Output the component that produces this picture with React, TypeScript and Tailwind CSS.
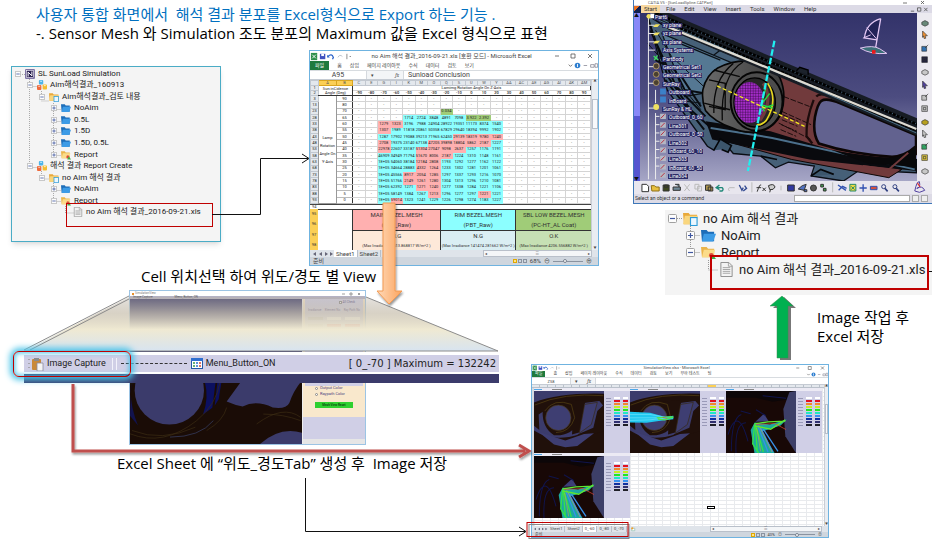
import type { ReactNode } from "react";
import clsx from "clsx";

const slideFont = "font-['Open_Sans','Noto_Sans_CJK_KR',sans-serif]";
const uiFont = "font-[Roboto,'Noto_Sans_CJK_KR',sans-serif]";

/* ---------- tree ---------- */

type IconKind = "app" | "cubes" | "project" | "folder" | "report" | "file";

interface Node {
  label: string;
  depth: number;
  icon: IconKind;
  sign?: "+" | "-";
}

const mainTree: Node[] = [
  { label: "SL SunLoad Simulation", depth: 0, icon: "app", sign: "-" },
  { label: "Aim해석결과_160913", depth: 1, icon: "cubes", sign: "-" },
  { label: "Aim해석결과_검토 내용", depth: 2, icon: "project", sign: "-" },
  { label: "NoAim", depth: 3, icon: "folder", sign: "+" },
  { label: "0.5L", depth: 3, icon: "folder", sign: "+" },
  { label: "1.5D", depth: 3, icon: "folder", sign: "+" },
  { label: "1.5D, 0.5L", depth: 3, icon: "folder", sign: "+" },
  { label: "Report", depth: 3, icon: "report", sign: "+" },
  { label: "해석 결과 Report Create", depth: 1, icon: "cubes", sign: "-" },
  { label: "no Aim 해석 결과", depth: 2, icon: "project", sign: "-" },
  { label: "NoAim", depth: 3, icon: "folder", sign: "+" },
  { label: "Report", depth: 3, icon: "report", sign: "-" },
  { label: "no Aim 해석 결과_2016-09-21.xls", depth: 4, icon: "file" },
];

const resultTree: Node[] = [
  { label: "no Aim 해석 결과", depth: 0, icon: "project", sign: "-" },
  { label: "NoAim", depth: 1, icon: "folder", sign: "+" },
  { label: "Report", depth: 1, icon: "report", sign: "-" },
  { label: "no Aim 해석 결과_2016-09-21.xls", depth: 2, icon: "file" },
];

const smallIndent = ["pl-[3px]", "pl-[15px]", "pl-[27px]", "pl-[39px]", "pl-[51px]"];
const largeIndent = ["pl-[3px]", "pl-[21px]", "pl-[39px]"];

const NodeIcon = ({ kind, className }: { kind: IconKind; className: string }) => (
  <svg viewBox="0 0 16 16" className={className}>
    {kind === "app" && (
      <>
        <rect x="0.5" y="0.5" width="15" height="15" fill="#4b3a80" />
        <rect x="2.5" y="2.5" width="11" height="11" fill="#2c2152" stroke="#fff" />
        <path d="M5 12V5l6 6V4" stroke="#fff" strokeWidth="1.6" fill="none" />
      </>
    )}
    {kind === "cubes" && (
      <>
        <rect x="3" y="0" width="7" height="7" rx="1.5" fill="#4db4e8" />
        <rect x="0" y="8" width="7" height="8" rx="1.5" fill="#ee6a3c" />
        <rect x="9" y="7" width="7" height="8" rx="1.5" fill="#f5bd30" />
        <path d="M5 2h3M2 10h3M11 9h3" stroke="#fff" strokeWidth="1.2" />
      </>
    )}
    {kind === "project" && (
      <>
        <path d="M0 2h6l1.500 2H15v10H1z" fill="#e9a93a" />
        <path d="M2 5h14l-2 9H0z" fill="#f9d67e" />
        <rect x="8" y="7" width="7" height="8.500" fill="#eaf7ff" stroke="#2d9bd8" strokeWidth="1.200" />
      </>
    )}
    {kind === "folder" && (
      <>
        <path d="M0 2h6l1.500 2H14v10H1z" fill="#1d6db8" />
        <path d="M3 6h13l-3 8.500H1z" fill="#3c9be6" />
      </>
    )}
    {kind === "report" && (
      <>
        <path d="M0 2h6l1.500 2H14v9H1z" fill="#eab44a" />
        <path d="M3 5h12l-2 8H1z" fill="#fbdc8a" />
        <circle cx="11" cy="11" r="2.500" fill="#e04a3a" />
        <path d="M10 15l2.500-5 3.500 5z" fill="#3fae49" />
      </>
    )}
    {kind === "file" && (
      <>
        <path d="M2 .5h8.500L14 4v11.500H2z" fill="#f3f3f3" stroke="#8a8a8a" />
        <path d="M10 .5V4.500h4M4 6h8M4 8h8M4 10h8M4 12h8" stroke="#9a9a9a" strokeWidth=".9" fill="none" />
      </>
    )}
  </svg>
);

const Tree = ({ nodes, large = false }: { nodes: Node[]; large?: boolean }) => (
  <ul className={clsx("relative grid auto-rows-fr", large ? "h-[68px] text-[13px]" : "h-[150px] text-[8px]", uiFont)}>
    {nodes.map((node, i) => (
      <li
        key={i}
        className={clsx("flex min-h-0 items-center whitespace-nowrap leading-none text-[#222]", large ? largeIndent[node.depth] : smallIndent[node.depth])}
      >
        <svg viewBox="0 0 9 9" className={clsx("shrink-0", large ? "mr-[6px] size-[9px]" : "mr-[4px] size-[6px]")}>
          {node.sign && (
            <>
              <rect x=".5" y=".5" width="8" height="8" rx="1" fill="#fdfdfd" stroke="#a0a0a0" />
              <path d={node.sign === "+" ? "M2 4.500h5M4.500 2v5" : "M2 4.500h5"} stroke="#3f57a0" strokeWidth="1.200" />
            </>
          )}
        </svg>
        <NodeIcon kind={node.icon} className={clsx("shrink-0", large ? "mr-[5px] size-[15px]" : "mr-[3px] size-[10px]")} />
        {node.label}
      </li>
    ))}
  </ul>
);

/* ---------- excel window ---------- */

interface ExcelWindowProps {
  title: string;
  cell: string;
  formula: string;
  ribbon: string[];
  tabs: string[];
  zoom: string;
  compact?: boolean;
  children: ReactNode;
}

const ExcelWindow = ({ title, cell, formula, ribbon, tabs, zoom, compact = false, children }: ExcelWindowProps) => (
  <section className={clsx("flex flex-col overflow-hidden border border-[#6fb3e0] bg-white leading-none text-[#444]", uiFont, compact ? "h-[174px] text-[4px]" : "h-[216px] text-[6px]")}>
    <div className={clsx("flex shrink-0 items-center", compact ? "h-[6px]" : "h-[10px]")}>
      <svg viewBox="0 0 46 10" className={compact ? "h-[6px]" : "h-[9px]"}>
        <path d="M1 1h7v8H1z" fill="#2f8f4a" />
        <path d="M2.500 3l4 4m0-4l-4 4" stroke="#fff" />
        <path d="M11 2h6v6h-6z" fill="#3f51c0" />
        <path d="M12.500 2h3v2.500h-3z" fill="#fff" />
        <path d="M20 5q4-4 6 1l-1 2" stroke="#2a62c9" strokeWidth="1.400" fill="none" />
        <path d="M19 3v3h3z" fill="#2a62c9" />
        <path d="M31 6q2-4 5-1" stroke="#b9bfc9" fill="none" />
        <path d="M41 2v6M44 5h2" stroke="#666" strokeWidth=".8" />
      </svg>
      <span className="flex-1 truncate text-center">{title}</span>
      <svg viewBox="0 0 46 8" className={compact ? "h-[6px]" : "h-[8px]"}>
        <path d="M3 4h4M19 2h4v4h-4zM36 2l4 4m0-4l-4 4" stroke="#555" strokeWidth=".8" fill="none" />
      </svg>
    </div>
    <div className={clsx("flex shrink-0 items-center gap-[8px] border-b border-[#d8dce0]", compact ? "h-[7px]" : "h-[10px] text-[5px]")}>
      {ribbon.map((item, i) => (
        <button key={item} className={clsx("whitespace-nowrap", i === 0 && "h-full bg-[#1f7a3e] text-white", i === 0 && (compact ? "px-[3px]" : "px-[5px]"))}>
          {item}
        </button>
      ))}
      <svg viewBox="0 0 36 8" className={clsx("ml-auto", compact ? "h-[5px]" : "h-[7px]")}>
        <path d="M2 3l2 2 2-2" stroke="#666" fill="none" />
        <circle cx="12" cy="4" r="3.200" fill="#2f7fd0" />
        <path d="M19 4h4M27 3h4v3h-4zM32 2h3v4h-3z" stroke="#667" strokeWidth=".7" fill="none" />
        <path d="M12 2.200v3.600" stroke="#fff" />
      </svg>
    </div>
    <div className={clsx("flex shrink-0 items-center border-b border-[#c5cbd3]", compact ? "h-[7px]" : "h-[9px] text-[7px]")}>
      <input aria-label="이름 상자" readOnly defaultValue={cell} className={clsx("h-full min-w-0 text-center", compact ? "w-[38px]" : "w-[56px]")} />
      <span className={clsx("flex h-full items-center justify-between border-x border-[#d5d9de] bg-[#f3f5f7] px-1 text-[5px]", compact ? "w-[26px]" : "w-[38px]")}>
        <span>▾</span>
        <i className="font-serif">fx</i>
      </span>
      <input aria-label="수식 입력줄" readOnly defaultValue={formula} className="h-full min-w-0 flex-1 px-1" />
    </div>
    <div className="flex min-h-0 flex-1">
      <div className="min-w-0 flex-1">{children}</div>
      <div className={clsx("flex flex-col items-center border-l border-[#c9ced6] bg-[#e9edf2] text-[3px]", compact ? "w-[4px]" : "w-[7px]")}>
        <span>▲</span>
        <span className="mt-[16px] h-[30px] w-full border border-[#b9c0ca] bg-[#f8f9fb]" />
        <span className="mt-auto">▼</span>
      </div>
    </div>
    <div className={clsx("flex shrink-0 items-center bg-[#dfe4ea]", compact ? "h-[6px]" : "h-[7px]")}>
      <svg viewBox="0 0 24 6" className={compact ? "h-[4px]" : "h-[6px]"}>
        <path d="M2 1v4M6 1v4L3 3zM12 1v4L9 3zM15 1v4l3-2zM20 1v4l3-2z" fill="#667" />
      </svg>
      {tabs.map((tab, i) => (
        <button key={tab} className={clsx("h-full border-r border-[#b9c0ca] px-[2px] whitespace-nowrap", (compact ? i === 2 : i === 0) && "bg-white")}>
          {tab}
        </button>
      ))}
      <svg viewBox="0 0 8 8" className="ml-[4px] h-[5px]">
        <path d="M1 2h5v4H1z" fill="#fff" stroke="#8ba" />
        <circle cx="2" cy="2" r="1.800" fill="#f0a030" />
      </svg>
      <span className="mr-[6px] ml-auto flex h-full w-[38%] items-center justify-between border border-[#b9c0ca] bg-[#f4f6f8] px-px text-[4px]">
        <span>◂</span>
        <span>≡</span>
        <span>▸</span>
      </span>
    </div>
    <div className={clsx("flex shrink-0 items-center gap-[3px] bg-[#cfd6de] px-[3px]", compact ? "h-[5px]" : "h-[8px]")}>
      <span>준비</span>
      <span className="ml-auto flex gap-px">
        <i className="size-[4px] border border-[#e0a800] bg-[#ffe48a]" />
        <i className="size-[4px] border border-[#8a93a0]" />
        <i className="size-[4px] border border-[#8a93a0]" />
      </span>
      <span>{zoom}</span>
      <span>⊖</span>
      <input
        type="range"
        aria-label="확대/축소"
        defaultValue={40}
        className="h-px w-[30px] appearance-none bg-[#8a93a0] [&::-webkit-slider-thumb]:size-[4px] [&::-webkit-slider-thumb]:appearance-none [&::-webkit-slider-thumb]:rounded-full [&::-webkit-slider-thumb]:border [&::-webkit-slider-thumb]:border-[#7a8390] [&::-webkit-slider-thumb]:bg-white"
      />
      <span className="mr-[3px]">⊕</span>
    </div>
  </section>
);

/* ---------- irradiance sheet ---------- */

const columnNames = ["C", "E", "G", "I", "K", "M", "O", "Q", "S", "U", "W", "Y", "AA", "AC", "AE", "AG", "AI", "AK", "AM"];
const longitudes = [-90, -80, -70, -60, -50, -40, -30, -20, -10, 0, 10, 20, 30, 40, 50, 60, 70, 80, 90];

// r = over the limit, g = below the limit, plain numbers are cyan
const rows: [number, number, string][] = [
  [3, 90, ""],
  [13, 80, ""],
  [23, 70, "- - - - - g0.034 - - - -"],
  [28, 65, "- - 1714 2724 3848 4891 7098 g3.922 g2.392 -"],
  [33, 60, "r1279 r1323 3196 7988 24904 28922 19351 11173 8374 1540"],
  [38, 55, "r1307 1989 11818 20861 50358 67829 29640 18394 9992 1902"],
  [43, 50, "1287 17902 19088 39213 71965 62450 r29139 r18319 r9780 r1240"],
  [48, 45, "r2708 19375 23140 67138 r47205 r39898 r18804 r5862 r2187 1227"],
  [53, 40, "r22978 22607 33187 r51304 r27047 r9098 r2637 1257 1176 1191"],
  [58, 35, "46909 34949 71794 r51670 r8006 r2187 1224 1310 1148 1161"],
  [63, 30, "1E+05 54060 38184 r12184 r2808 1193 1292 1277 1162 1122"],
  [68, 25, "1E+05 34664 28883 r4332 r1264 1233 1302 1281 1201 1061"],
  [73, 20, "1E+05 45566 r8917 r2054 r1285 1297 1337 1293 1216 1070"],
  [78, 15, "1E+05 51766 r2149 r1261 r1280 1304 1313 1296 1210 1081"],
  [83, 10, "1E+05 62392 1271 r1271 r1240 1277 1338 1284 1221 1106"],
  [88, 5, "1E+05 58149 1384 1267 r1213 1296 1277 1297 r1221 1221"],
  [93, 0, "1E+05 r59014 1323 1241 1229 1226 1298 1274 1183 1227"],
];

const cellColor = (value: string) => {
  if (value === "-") return "bg-white border-[#d4d4d4]";
  if (value[0] === "r") return "bg-[#ffb0b0] border-[#ffb0b0]";
  if (value[0] === "g") return "bg-[#a0cc78] border-[#a0cc78]";
  return "bg-[#8cffff] border-[#8cffff]";
};

const meshes = [
  { name: "MAIN BEZEL.MESH", material: "(PBT_Raw)", result: "N.G", max: "(Max Irradiance 1513.868817 W/m^2 )", head: "bg-[#ffb0b0]", body: "bg-[#fde9d9]", width: "flex-[7]" },
  { name: "RIM BEZEL.MESH", material: "(PBT_Raw)", result: "N.G", max: "(Max Irradiance 141474.281662 W/m^2 )", head: "bg-[#8cffff]", body: "bg-[#daeef3]", width: "flex-[6]" },
  { name: "SBL LOW BEZEL.MESH", material: "(PC-HT_AL Coat)", result: "O.K", max: "(Max Irradiance 4206.556882 W/m^2 )", head: "bg-[#a0cc78]", body: "bg-[#c6e0b4]", width: "flex-[6]" },
];

const IrradianceSheet = () => (
  <div className="flex h-full flex-col">
    <table className="h-[124px] w-full table-fixed border-collapse text-center text-[4px] leading-none text-[#222]">
      <colgroup>
        <col className="w-[8px]" />
        <col className="w-[18px]" />
        <col className="w-[16px]" />
      </colgroup>
      <thead>
        <tr className="bg-[#e4e8ed] text-[#555]">
          <th className="border border-[#c2c8d0]" />
          <th className="border border-[#d9a520] bg-[#fbcf55] font-normal">A</th>
          <th className="border border-[#d9a520] bg-[#fbcf55] font-normal">B</th>
          {columnNames.map((name) => (
            <th key={name} className="border border-[#c2c8d0] font-normal">{name}</th>
          ))}
        </tr>
        <tr>
          <th className="border border-[#c2c8d0] bg-[#e4e8ed] font-normal">1</th>
          <th rowSpan={2} colSpan={2} className="border-r border-b border-[#333] font-normal whitespace-nowrap">
            Sun inCidence
            <br />
            Angle (Deg)
          </th>
          <th colSpan={19} className="border-r border-b border-r-[#333] border-b-[#d4d4d4] font-normal">Lamimg Rotation Angle On Z-Axis</th>
        </tr>
        <tr>
          <th className="border border-[#c2c8d0] bg-[#e4e8ed] font-normal">2</th>
          {longitudes.map((deg) => (
            <th key={deg} className="border-b border-[#333] font-medium">{deg}</th>
          ))}
        </tr>
      </thead>
      <tbody>
        {rows.map(([row, latitude, text], r) => {
          const values = ["-", "-", ...(text ? text.split(" ") : Array(10).fill("-")), ...Array(7).fill("-")];
          return (
            <tr key={row}>
              <th className="border border-[#c2c8d0] bg-[#e4e8ed] p-0 font-normal">{row}</th>
              {r === 0 && (
                <th rowSpan={17} className="border border-[#999] leading-[8px] font-normal">
                  Lamp Rotation Angle On Y-Axis
                </th>
              )}
              <th className="border border-[#bbb] border-r-[#333] p-0 font-normal">{latitude}</th>
              {values.map((value, i) => (
                <td key={i} className={clsx("border p-0", cellColor(value))}>{value.replace(/^[rg]/, "")}</td>
              ))}
            </tr>
          );
        })}
      </tbody>
    </table>
    <div className="h-[5px] shrink-0 border-t border-[#444] pl-[2px] text-[4px]">94</div>
    <div className="flex min-h-0 flex-1 text-[#333]">
      <div className="grid w-[8px] grid-rows-4 items-center bg-[#fbcf55] text-center text-[4px]">
        <span>95</span>
        <span>96</span>
        <span>97</span>
        <span>98</span>
      </div>
      <div className="w-[34px] border-t border-[#444]" />
      {meshes.map((mesh) => (
        <div key={mesh.name} className={clsx("flex min-w-0 flex-col border-t border-l border-[#333] text-center", mesh.width)}>
          <div className={clsx("flex flex-1 flex-col justify-around border-b border-[#333] text-[6px]", mesh.head)}>
            <span className="whitespace-nowrap">{mesh.name}</span>
            <span>{mesh.material}</span>
          </div>
          <div className={clsx("flex flex-1 flex-col justify-around text-[6px]", mesh.body)}>
            <span>{mesh.result}</span>
            <span className="text-[4px] whitespace-nowrap">{mesh.max}</span>
          </div>
        </div>
      ))}
    </div>
  </div>
);

/* ---------- capture sheet ---------- */

const legend = ["bg-white", "bg-[#e01020]", "bg-[#f08830]", "bg-[#c8f020]", "bg-[#20e820]", "bg-[#20e8c8]", "bg-[#3890f0]", "bg-[#1030a0]", "bg-[#303070]", "bg-[#202028]"];

const LampScene = ({ beam = false }: { beam?: boolean }) => (
  <svg viewBox="0 0 210 185" preserveAspectRatio="none" className="h-full w-[70px] bg-[#3b3b6b]">
    <path d="M0 34Q80 4 210 8V46L196 30 150 36 60 40 14 70 16 116 0 104zM0 118Q80 170 210 96V185H0z" fill="#20100a" />
    <path d="M26 60Q70 16 126 36L134 94Q110 136 60 132 24 110 26 60zM120 30l34-2-14 94-26 8z" fill="#20100a" />
    <path d="M190 60l20-20v80l-60 16-20-6 48-20z" fill="#20100a" />
    <ellipse cx="73" cy="80" rx="38" ry="38" fill="#3e3e72" stroke="#4a3812" strokeWidth="2" />
    <path d="M152 40l38-6-18 66-36 26z" fill="#3e3e72" stroke="#382a14" strokeWidth="2" />
    <path d="M14 122l80 26 56-20 30-2-50 38-36 4-34-8z" fill="#3e3e72" />
    <path d="M2 42Q90 4 208 14M32 60Q60 20 112 40l10 40q-14 44-56 44" stroke="#574414" strokeWidth="2" fill="none" />
    {beam && (
      <>
        <path d="M0 62l60 3 44 12 26-3v10l-28 3-52 8-50-1z" fill="#20c8f0" />
        <path d="M0 70h60l45 8M0 80h90M0 88l60-2 50-6" stroke="#8cecff" strokeWidth="1.500" fill="none" />
        <path d="M80 80l28-2 22-1M84 84l20 2 26-8" stroke="#50e050" strokeWidth="4" fill="none" />
        <path d="M98 79l14 3" stroke="#e85030" strokeWidth="2" />
      </>
    )}
  </svg>
);

const RayScene = () => (
  <svg viewBox="0 0 210 185" preserveAspectRatio="none" className="h-full w-[70px] bg-[#180806]">
    <path d="M0 20h90l50 12 70-10V0H0z" fill="#0c0608" />
    <path d="M172 54l18-50 20-4v185l-32-50z" fill="#3d3f68" />
    <path d="M88 92l26-24 14 22z" fill="#3d3f78" />
    <path d="M6 130q30-90 60 20M16 180q0-100 30-110M30 185q-4-90 30-90M44 60l30 8M90 56l30 18M110 14l70 8" stroke="#10144c" strokeWidth="3" fill="none" />
    <path d="M74 116l12-22 46 6 50-15-18 18-56 18 40 68H86z" fill="#1ca8a0" />
    <path d="M86 98l-6 60 18 27M88 102l6 80M90 104l22 78" stroke="#38e048" strokeWidth="4" fill="none" />
    <path d="M96 106l30 76M104 110l36 72M112 114l44 66" stroke="#3890e8" strokeWidth="4" />
    <path d="M92 110l12 70M98 102l40 80" stroke="#e8a040" strokeWidth="1.500" />
    <path d="M86 98l40-6 52-2M86 104l48 10 44-28" stroke="#60e830" strokeWidth="4" fill="none" />
    <path d="M90 100l56-3 34 18" stroke="#e84838" strokeWidth="2" fill="none" />
  </svg>
);

const Capture = ({ children }: { children: ReactNode }) => (
  <figure className="flex h-[65px] w-[96px] flex-col">
    <div className="flex h-[3px] items-center gap-[10px] bg-[#eceaf4]">
      <i className="h-px w-[8px] bg-[#50a8e8]" />
      <i className="h-px w-[10px] bg-[#888]" />
    </div>
    <div className="flex min-h-0 flex-1">
      {children}
      <div className="flex-1 bg-[#d0cfe6] pt-[6px]">
        <div className="grid grid-cols-3 gap-x-[3px] gap-y-px px-[2px]">
          {legend.map((color) => [
            <i key={color} className="my-auto h-px bg-[#9a9ab8]" />,
            <i key={color + "a"} className={clsx("h-[2px]", color)} />,
            <i key={color + "b"} className={clsx("h-[2px]", color)} />,
          ])}
        </div>
      </div>
    </div>
  </figure>
);

const CaptureSheet = () => (
  <div className="flex h-full flex-col">
    <div className="flex h-[3px] shrink-0 justify-end border-b border-[#b9c0ca] bg-[repeating-linear-gradient(90deg,#e4e8ed_0_7px,#b9c0ca_7px_8px)]">
      <i className="mr-[108px] w-[8px] bg-[#fbcf55]" />
    </div>
    <div className="relative flex-1 border-l-2 border-[#d5dae1] bg-[linear-gradient(#e8eaed_1px,transparent_1px),linear-gradient(90deg,#e8eaed_1px,transparent_1px)] bg-[size:8px_4px]">
      <div className="flex flex-wrap content-start">
        <Capture><LampScene /></Capture>
        <Capture><LampScene beam /></Capture>
        <Capture><RayScene /></Capture>
        <Capture><RayScene /></Capture>
      </div>
      <i className="absolute right-[109px] bottom-[17px] h-[3px] w-[8px] border border-black" />
    </div>
  </div>
);

/* ---------- viewer with magnified toolbar ---------- */

const Viewer = () => (
  <div className={clsx("flex h-[155px] w-[237px] flex-col border border-[#9cc4e4] bg-white", uiFont)}>
    <div className="flex h-[5px] items-center px-[2px] text-[3px] leading-none text-[#777]">
      <i className="mr-px size-[2px] bg-[#e8902c]" />
      SimulationView
      <svg viewBox="0 0 22 4" className="ml-auto h-[4px]" fill="none" stroke="#777" strokeWidth=".7">
        <path d="M1 2h3M9 1h2v2H9zM17 1l2 2m0-2l-2 2" />
      </svg>
    </div>
    <div className="flex h-[3px] items-center bg-[#b4b2c4] text-[3px] leading-none text-[#555]">
      <span className="ml-[3px]">Image Capture</span>
      <span className="ml-[22px]">Menu_Button_ON</span>
    </div>
    <div className="flex min-h-0 flex-1">
      <svg viewBox="0 0 516 441" preserveAspectRatio="none" className="h-full w-[172px] bg-[#1a0c06]">
        <path d="M0 0h516v200H0z" fill="#3b3b6b" />
        <path d="M225 255l32-4-10 80-28 20q18-50 6-96zM262 255h12l-8 50-12 20z" fill="#0c1060" />
        <path d="M4 255q-8 60 20 130l-24-30z" fill="#12134e" />
        <path d="M0 410q100 40 200-40 60-50 70-118M230 400q50-30 60-70M6 400q90 36 190-10M380 380q80-60 132-20M400 350q60 0 112 20" stroke="#3c2e14" strokeWidth="2" fill="none" />
        <path d="M120 420q90 0 130-50" stroke="#39446e" strokeWidth="2" fill="none" />
        <circle cx="118" cy="278" r="104" fill="#3b3b6b" />
        <path d="M290 312l44-62h180q-24 30-36 66-10 20-50 14-50-24-90-3-24-4-48-15z" fill="#3b3b6b" />
        <path d="M390 441q60-54 126-34v34z" fill="#3b3b6b" />
      </svg>
      <div className="flex min-w-0 flex-1 flex-col border-l border-[#eee]">
        <div className="flex flex-1 flex-col bg-[#f9e8cc] px-[12px] text-[4px] leading-none text-[#4a3f80]">
          <div className="-mx-[10px] h-[87px] shrink-0 bg-[#d0cfe6] pt-[2px] text-[3px]">
            <label className="flex items-center justify-end gap-px pr-[8px]">
              <input type="checkbox" className="size-[3px] appearance-none border border-[#888] bg-white" />
              All Check
            </label>
            <div className="mt-[5px] flex justify-between px-[3px]">
              <span>Irradiance</span>
              <span>Element No</span>
              <span>Ray Path No</span>
            </div>
            <div className="mt-[5px] grid grid-cols-3 gap-[4px] px-[3px]">
              <i className="h-[3px] bg-[#bbb]" />
              <i className="h-[3px] bg-white" />
              <i className="h-[3px] bg-white" />
              <i className="h-[3px] bg-[#bbb]" />
              <i className="h-[3px] bg-[#e05050]" />
              <i className="h-[3px] bg-[#e05050]" />
            </div>
          </div>
          <label className="mb-[2px] flex h-[4px] items-center gap-[2px] whitespace-nowrap">
            <input type="radio" name="colour" className="size-[3px] appearance-none rounded-full border border-[#888] bg-white" />
            Output Color
          </label>
          <label className="flex h-[4px] items-center gap-[2px] whitespace-nowrap">
            <input type="radio" name="colour" className="size-[3px] appearance-none rounded-full border border-[#888] bg-white" />
            Raypath Color
          </label>
          <button className="mt-[6px] h-[6px] bg-[#2fd02f] text-[3px] leading-none font-bold whitespace-nowrap text-[#0c4c10]">Mesh View Reset</button>
        </div>
        <div className="h-[22px] bg-[#d0cfe6]" />
        <div className="h-[5px] bg-[#e6e6e6]" />
      </div>
    </div>
  </div>
);

const Toolbar = () => (
  <div className={clsx("w-[475px]", uiFont)}>
    <div className="flex h-[22px] items-center border-t-[3px] border-b-2 border-white bg-[#d0cfe6] text-[9px] text-[#222]">
      <button className="ml-1 flex items-center gap-[3px] whitespace-nowrap">
        <svg viewBox="0 0 16 14" className="h-[14px]">
          <path d="M1 2v1M1 6v1M1 10v1" stroke="#999" strokeWidth="1.500" />
          <rect x="4" y="2" width="9" height="11" rx="1" fill="#c98a3a" />
          <rect x="6" y="1" width="5" height="3" fill="#8c8c8c" />
          <path d="M9 6h6v8H9z" fill="#f5f5f5" stroke="#8a8aa0" strokeWidth=".8" />
        </svg>
        Image Capture
      </button>
      <i className="ml-[6px] h-[12px] w-[5px] border-x border-[#f2f2fa]" />
      <i className="mx-[4px] w-[66px] border-t border-dashed border-[#333]" />
      <button className="flex items-center gap-[3px] whitespace-nowrap">
        <svg viewBox="0 0 12 11" className="h-[11px]">
          <rect x=".5" y=".5" width="11" height="10" fill="#fff" stroke="#2459a8" />
          <path d="M0 0h12v3H0z" fill="#2f6fd0" />
          <path d="M2 5h2M2 8h2" stroke="#3a9a4a" strokeWidth="1.500" />
          <path d="M5 5h2M5 8h2" stroke="#2f6fd0" strokeWidth="1.500" />
          <path d="M8 5h2M8 8h2" stroke="#d04a3a" strokeWidth="1.500" />
        </svg>
        Menu_Button_ON
      </button>
      <span className="mr-[3px] ml-auto font-['DejaVu_Sans',sans-serif] text-[10px] whitespace-nowrap">[ 0_-70 ] Maximum = 132242</span>
    </div>
    <div className="h-[9px] bg-[#3b3b6b]" />
  </div>
);

/* ---------- CAD window ---------- */

const cadTree = ["Part6", "xy plane", "yz plane", "zx plane", "Axis Systems", "PartBody", "Geometrical Set1", "Geometrical Set2", "SunRay", "Outboard", "InBoard", "SunRay & HL", "Outboard_0_60", "Line301", "Outboard_0_50", "Line302", "InBoard_60_10", "Line303", "InBoard_60_50", "Line304"];

const CadScene = () => (
  <svg viewBox="12 38 855 507" preserveAspectRatio="none" className="h-full w-full">
    <defs>
      <linearGradient id="sky" x2="0" y2="1">
        <stop offset="0" stopColor="#33336a" />
        <stop offset=".5" stopColor="#4c4c80" />
        <stop offset="1" stopColor="#a6a6c6" />
      </linearGradient>
      <linearGradient id="barrel">
        <stop offset="0" stopColor="#6a6a6a" />
        <stop offset="1" stopColor="#3c3c3c" />
      </linearGradient>
      <pattern id="mesh" width="8" height="8" patternUnits="userSpaceOnUse">
        <path d="M0 0h8M0 0v8" stroke="#2c0838" strokeWidth="2.500" />
      </pattern>
    </defs>
    <path d="M12 38h855v507H12z" fill="url(#sky)" />
    <path d="M36 45L100 85 440 225 560 430 865 480V520L690 512 640 545 540 530 550 500 470 488 430 505 385 470 300 462 272 430 240 452 220 440 96 270z" fill="#466078" stroke="#0a0d14" strokeWidth="4" />
    <path d="M80 100l220 90-90 90-60 10zM300 120l-60 45M110 120l150 60" fill="#557893" stroke="#0c1218" strokeWidth="4" />
    <path d="M38 60l60 170 70 100 70 60M44 90l80 170 90 90M60 180l60 30 30 60 60 10M140 230l60 90M90 240l120 150" stroke="#080b10" strokeWidth="6" fill="none" />
    <path d="M36 130l80 90M60 90l50 80 110 100M120 300l80 10M150 270l50 60" stroke="#0b1016" strokeWidth="3" fill="none" />
    <path d="M428 215l62 15 110 45 265 118v72L812 515 520 455 395 405z" fill="#713a3c" stroke="#160808" strokeWidth="4" />
    <path d="M240 395l180 25 400 90-40 25-300-55-240-65z" fill="#713a3c" stroke="#0a0505" strokeWidth="3" />
    <path d="M215 365l200 30 200 60 250 35v25l-330-35-300-60z" fill="#090a0e" />
    <path d="M230 385l190 30 440 95" stroke="#4c708c" strokeWidth="6" fill="none" />
    <path d="M572 303q15-10 60 8l232 95v34q-34 30-74 32-126-8-226-40-20-30-12-80 8-40 20-49z" fill="#62628f" stroke="#0c0606" strokeWidth="8" />
    <path d="M556 290q10-12 40-2M548 300q-24 60-22 110l18 22" stroke="#1c0c0c" strokeWidth="7" fill="none" />
    <path d="M600 450q110 24 190 24 40-2 74-32v60l-150-10z" fill="#08080a" />
    <path d="M700 500l80 10 60-50" stroke="#713a3c" strokeWidth="6" fill="none" />
    <path d="M455 290l80 30M450 335l90 40M440 370l100 50M452 345l48 20m-50-5l48 20m-50-5l48 20m-50-5l48 20" stroke="#190b0b" strokeWidth="3" strokeDasharray="18 5" />
    <path d="M206 270q10-45 46-66 60-30 120-18 50 10 72 48 22 50 4 106-22 50-78 56-36 6-70-10-60-20-86-54-12-30-8-62z" fill="url(#barrel)" stroke="#060606" strokeWidth="5" />
    <path d="M300 190q-64 50-60 150M330 186q-70 40-64 176M210 310l80 20M240 210l80 20M225 240l50 10v80l-50-10" stroke="#080808" strokeWidth="4" fill="none" />
    <ellipse cx="372" cy="305" rx="80" ry="88" fill="#4c4c4c" stroke="#050505" strokeWidth="6" />
    <ellipse cx="366" cy="308" rx="64" ry="74" fill="#262626" stroke="#000" strokeWidth="4" />
    <path d="M406 250q34 50-4 112-12 14-30 14" stroke="#e8d820" strokeWidth="5" fill="none" />
    <path d="M392 250q34 50-10 112" stroke="#713a3c" strokeWidth="10" fill="none" />
    <ellipse cx="350" cy="308" rx="46" ry="62" fill="#a32bc8" />
    <ellipse cx="350" cy="308" rx="46" ry="62" fill="url(#mesh)" />
    <path d="M400 265l-14 50 36 10M386 315l26-34M386 315l10 20m-6-10l34-10" stroke="#20e040" strokeWidth="4" fill="none" />
    <path d="M46 38h54l767 318v52L100 88z" fill="#171c24" />
    <path d="M80 48l785 324M70 60l795 340M50 44l400 180" stroke="#4b7088" strokeWidth="3" />
    <path d="M60 38l807 336M100 68l767 325" stroke="#000" strokeWidth="8" strokeDasharray="10 3" />
    <path d="M98 80l767 308" stroke="#dedbd2" strokeWidth="7" />
    <path d="M495 212l10-10 26 8v14" fill="#1c222c" stroke="#000" strokeWidth="4" />
    <path d="M240 452l20-34 34 20-10 20-20-8M385 470l50 10M540 530l30-20 40 15" fill="#3c566c" stroke="#05070a" strokeWidth="5" />
    <path d="M250 258l270 122" stroke="#f4e820" strokeWidth="4" strokeDasharray="12 7" />
    <path d="M427 122l-82 393" stroke="#20f0f0" strokeWidth="7" strokeDasharray="20 6" />
    <path d="M755 55l-18 100M755 55q-46 14-50 58l38 6" stroke="#e4c8f4" strokeWidth="4" fill="#222258" />
    <path d="M712 82l30 34M700 114l24-10" stroke="#e4c8f4" strokeWidth="3" />
    <path d="M692 144q38-10 60 2l22 14q-50 4-82-16z" fill="#3c7078" stroke="#e4c8f4" strokeWidth="3" />
    <path d="M728 150h11v11h-11z" fill="#f01818" />
    <path d="M38 50v490M60 270v40M60 340v200M38 75h20m-20 25h20m-20 25h20M38 150h20M38 200h20M38 250h20M38 325h20m2 25h12m-12 25h12m-12 25h12m-12 25h12m-12 25h12m-12 25h12m-12 25h12" stroke="#eee" strokeWidth="3" fill="none" />
    <g fill="#f0e060">
      <path d="M52 80l8-8h14l-8 8zM52 105l8-8h14l-8 8zM52 130l8-8h14l-8 8z" />
      <circle cx="39" cy="48" r="7" />
      <circle cx="62" cy="322" r="9" />
    </g>
    <path d="M44 40h12v14H44z" fill="#fff" />
    <path d="M54 168l14 12M56 180l10-14" stroke="#40e060" strokeWidth="4" />
    <g fill="#4a4030" stroke="#d8b878" strokeWidth="2">
      <circle cx="62" cy="198" r="9" />
      <circle cx="62" cy="223" r="9" />
      <circle cx="62" cy="248" r="9" />
    </g>
    <path d="M74 266h18v18H74zM74 290h18v18H74z" fill="#3c80c8" />
    <g fill="#b4b8c4">
      <path d="M74 342h18v16H74zM74 368h18v16H74zM74 393h18v16H74zM74 418h18v16H74zM74 444h18v16H74zM74 469h18v16H74zM74 494h18v16H74zM74 519h18v16H74z" />
    </g>
    <path d="M76 356l12-12M76 382l12-12M76 407l12-12M76 432l12-12M76 458l12-12M76 483l12-12M76 508l12-12M76 533l12-12" stroke="#b83040" strokeWidth="3" />
  </svg>
);

const sideIcons = ["#688878", "#f09030", "#3070b0", "#202040", "#c8c8c8", "#5040a0", "#c0c0c0", "#c8c8c8", "#b8a020", "#c4c4c4", "#30a060", "#e0c840", "#c8c8c8"];

const CadWindow = () => (
  <section className={clsx("flex h-[204px] flex-col border-b border-l border-[#3f78b8] bg-[#eceaf0] text-[#333]", uiFont)}>
    <div className="flex h-[5px] shrink-0 items-center bg-white pl-[14px] text-[4px] leading-none text-[#555]">
      CATIA V5 - [SunLoadSpline.CATPart]
      <svg viewBox="0 0 24 5" className="mr-[6px] ml-auto h-[5px]" fill="none" stroke="#555" strokeWidth=".8">
        <path d="M1 3h4M19 1l3 3m0-3l-3 3" />
      </svg>
    </div>
    <nav className="flex h-[8px] shrink-0 items-center gap-[3px] bg-[#dcdae6] text-[6px] leading-none">
      <i className="-mr-[3px] size-[7px] bg-[linear-gradient(135deg,#e87020_40%,#102050_40%)]" />
      {["Start", "File", "Edit", "View", "Insert", "Tools", "Window", "Help"].map((item, i) => (
        <button key={item} className={clsx("px-[3px]", i === 0 && "h-full bg-[#f8d8a0]")}>{item}</button>
      ))}
      <svg viewBox="0 0 22 6" className="mr-1 ml-auto h-[5px]">
        <path d="M1 5h4M9 1h4v4H9zM17 1l4 4m0-4l-4 4" stroke="#555" fill="none" />
      </svg>
    </nav>
    <div className="flex min-h-0 flex-1">
      <div className="flex w-[6px] flex-col justify-between bg-[#5555d0] text-[5px] leading-none text-[#111]">
        <span className="bg-[#8888f8] pb-[98px]">▲</span>
        <span>▼</span>
      </div>
      <div className="relative min-w-0 flex-1">
        <CadScene />
        <ul className="absolute inset-y-0 left-0 grid auto-rows-fr text-[5px] leading-none text-white">
          {cadTree.map((item, i) => (
            <li key={item} className={clsx("flex items-center", i === 0 ? "pl-[14px]" : i > 11 || i === 9 || i === 10 ? "pl-[28px]" : "pl-[22px]")}>
              <span className="bg-[#2a2a66] px-px whitespace-nowrap">{item}</span>
            </li>
          ))}
        </ul>
      </div>
      <div className="flex w-[15px] flex-col items-center justify-around bg-[#eceaf0] py-1">
        {sideIcons.map((color, i) => (
          <svg key={i} viewBox="0 0 10 10" className="size-[8px]" stroke="#333" strokeWidth=".8" fill={color}>
            {i % 4 === 0 && <path d="M1 4l4-2 4 2v3L5 9 1 7z" />}
            {i % 4 === 1 && <path d="M2 0l6 6H5l1 3-2 .5L3 6 2 8z" />}
            {i % 4 === 2 && <path d="M1 3h6v6H1zM5 5l4-4" />}
            {i % 4 === 3 && <path d="M1 1h7v7H1zM3 3h3v3H3z" />}
          </svg>
        ))}
      </div>
    </div>
    <div className="h-[13px] bg-[#e8e6ee]">
      <svg viewBox="0 0 900 39" preserveAspectRatio="none" className="h-full w-full" fill="none" stroke="#333" strokeWidth="3">
        <path d="M24 10h14l6 6v16H24z" fill="#fff" />
        <path d="M52 14h10l4 4h10v12H54z" fill="#e8c040" stroke="#907018" />
        <path d="M88 12h18v18H88zM92 12h10v7H92z" fill="#404820" />
        <path d="M118 18h22v10h-22zM124 10h12v8" fill="#708898" />
        <path d="M152 10l16 20m0-20l-16 20M184 10h12v14h-12zM192 16h12v14h-12z" stroke="#bbb" />
        <path d="M216 12h16v16h-16zM224 18h14v12h-14z" fill="#b09850" />
        <path d="M250 20h16q6 4 0 10h-8M258 12l-10 8 10 6" stroke="#208878" strokeWidth="4" />
        <path d="M304 20h-16q-6 4 0 10" stroke="#bbb" />
        <path d="M318 12l8 16 4-8M334 14l6 8-10 8" stroke="#304890" strokeWidth="4" />
        <path d="M356 4v30M600 4v30" stroke="#bbb" />
        <path d="M372 32q8-24 12-20M370 20h14M388 20l10 10m0-10l-10 10" />
        <path d="M406 14q16-8 20 4-4 10-16 8zM412 26l-2 8" fill="#ccc" />
        <path d="M444 14v14" stroke="#bbb" />
        <path d="M464 12h20v18h-20z" fill="#3038a0" />
        <path d="M496 24l12-10 12-4-6 18zM514 26h8v6h-8z" fill="#5070c0" />
        <circle cx="542" cy="21" r="9" fill="#555" />
        <path d="M564 10h8v8h-8zM572 22h8v8h-8z" fill="#40a050" />
        <path d="M616 12l24 16M618 28l12-12 12 6" stroke="#3050b0" strokeWidth="4" />
        <path d="M652 10h18v20h-18z" fill="#f0d840" stroke="#208868" />
        <path d="M656 16l10 10m0-10l-10 10" stroke="#208868" />
        <path d="M692 10v22M681 21h22" stroke="#3050b0" strokeWidth="4" />
        <path d="M714 16h20v10h-20z" fill="#d05040" stroke="#3050b0" />
        <circle cx="754" cy="17" r="6" stroke="#304080" />
        <circle cx="788" cy="17" r="6" stroke="#304080" />
        <path d="M758 22l8 9M792 22l8 9" stroke="#304080" strokeWidth="5" />
        <path d="M848 30q6-30 14-28 4 20-8 20 16-10 24 6l-16 6z" stroke="#5040a0" />
        <path d="M856 6l8 12" stroke="#e03030" strokeWidth="4" />
      </svg>
    </div>
    <label className="flex h-[9px] items-center bg-[#dddbe6] pl-px text-[5px] leading-none whitespace-nowrap">
      Select an object or a command
      <input readOnly defaultValue="" className="ml-auto h-[7px] w-[116px] min-w-0 border border-[#aaa] bg-white" />
      <i className="mx-[2px] size-[7px] border border-[#aaa] bg-[#eee]" />
      <i className="mr-[4px] size-[7px] border border-[#aaa] bg-[#eee]" />
    </label>
  </section>
);

/* ---------- connectors drawn over the slide ---------- */

const Connectors = () => (
  <svg width="932" height="540" className="pointer-events-none absolute top-0 left-0" fill="none">
    <defs>
      <linearGradient id="orange">
        <stop offset="0" stopColor="#ffd9b8" />
        <stop offset="1" stopColor="#fba45e" />
      </linearGradient>
      <filter id="drop" x="-20%" y="-20%" width="140%" height="140%">
        <feDropShadow dx="1" dy="2" stdDeviation="1" floodOpacity=".4" />
      </filter>
    </defs>
    <g stroke="#111">
      <path d="M212 214.500h48.500v-56H308M302 154l7 4.500-7 4.500" />
      <path d="M305.500 478v53.500H525M519 527l7 4.500-7 4.500M929 271.500h3" />
    </g>
    <path d="M383 203h12v88h7l-13 13-12-13h6z" fill="url(#orange)" stroke="#f29a52" filter="url(#drop)" />
    <path d="M73 384v67h452M519 445l10 6-10 6" stroke="#c0504d" strokeWidth="3" filter="url(#drop)" />
    <path d="M784 297l12 11h-5v52h-11v-52h-7z" fill="#777" />
    <path d="M782 296l11 10h-5v52h-11v-52h-7z" fill="#00b050" stroke="#3c8a50" strokeWidth=".5" />
    <rect x="529" y="524.500" width="100" height="14" stroke="#888" />
    <rect x="527" y="522.500" width="101" height="14" stroke="#c00000" />
  </svg>
);

export default function App() {
  return (
    <main className={clsx("relative flex min-h-screen w-full overflow-hidden bg-white text-black", slideFont)}>
      <div className="w-[531px] shrink-0">
        <header className="pt-[5px] pl-9 text-[15px] leading-[19px] whitespace-pre">
          <h1 className="text-[#0070c0]">사용자 통합 화면에서  해석 결과 분포를 Excel형식으로 Export 하는 기능 .</h1>
          <p>-. Sensor Mesh 와 Simulation 조도 분포의 Maximum 값을 Excel 형식으로 표현</p>
        </header>

        <div className="mt-[7px] flex">
          <div className="relative mt-4 ml-[11px] h-[176px] w-[210px] shrink-0 border border-[#4bacc6] bg-[#f4f4f4] pt-px shadow-md">
            <svg viewBox="0 0 208 174" className="absolute inset-0" fill="none" stroke="#aaa" strokeDasharray="1 1">
              <path d="M6 7.500h8M17.500 12v88M17.500 19.500h8M17.500 100.500h8M29.500 24v10h8M29.500 104v8h8M41.500 36v53M41.500 42.500h8M41.500 54.500h8M41.500 65.500h8M41.500 77.500h8M41.500 88.500h8M41.500 116v19M41.500 123.500h8M41.500 134.500h8M53.500 139v7h8" />
            </svg>
            <Tree nodes={mainTree} />
            <span className="absolute top-[136px] left-[54px] h-[24px] w-[147px] border border-[#c00000]" />
          </div>
          <div className="ml-[88px] w-[290px] shrink-0">
            <ExcelWindow
              title="no Aim 해석 결과_2016-09-21.xls  [호환 모드] - Microsoft Excel"
              cell="A95"
              formula="Sunload Conclusion"
              ribbon={["파일", "홈", "삽입", "페이지 레이아웃", "수식", "데이터", "검토", "보기"]}
              tabs={["Sheet1", "Sheet2"]}
              zoom="68%"
            >
              <IrradianceSheet />
            </ExcelWindow>
          </div>
        </div>

        <p className="pl-[141px] text-[15px] leading-[20px] whitespace-nowrap">Cell 위치선택 하여 위도/경도 별 View</p>

        <div className="relative mt-1 pl-[129px]">
          <Viewer />
          <svg width="500" height="62" className="absolute top-0 left-0">
            <defs>
              <linearGradient id="lens" x2="0" y2="1">
                <stop offset="0" stopColor="#b8b0a4" stopOpacity=".35" />
                <stop offset=".3" stopColor="#cbc3b2" stopOpacity=".75" />
                <stop offset=".6" stopColor="#efe9d2" />
                <stop offset="1" stopColor="#d8e4f0" />
              </linearGradient>
            </defs>
            <path d="M129 7L24 61h474L366 7z" fill="url(#lens)" />
            <path d="M129 6L24 60M129 9L30 60M366 7l132 54M24 61h474" stroke="#8c8c8c" fill="none" />
          </svg>
          <div className="absolute top-[62px] left-[24px]">
            <Toolbar />
          </div>
          <span className="pointer-events-none absolute top-[61px] left-[13px] h-[26px] w-[118px] rounded-md border border-[#c00000] shadow-[0_0_6px_3px_#4bc4e8,inset_0_0_5px_1px_#4bc4e8]" />
        </div>

        <p className="mt-2 pl-[117px] text-[15px] leading-[20px] whitespace-pre">Excel Sheet 에 “위도_경도Tab” 생성 후  Image 저장</p>
      </div>

      <div className="flex min-w-0 flex-1 flex-col">
        <div className="ml-[102px]">
          <CadWindow />
        </div>
        <div className="relative mt-[6px] ml-[134px] h-[85px] bg-[#f4f4f4]">
          <svg width="100" height="85" className="absolute top-0 left-0" fill="none" stroke="#999" strokeDasharray="1 1">
            <path d="M8 8.500h10M25.500 16v28M25.500 25.500h10M25.500 42.500h10M43.500 50v10h10" />
          </svg>
          <Tree nodes={resultTree} large />
          <span className="absolute top-[45px] right-[3px] left-[45px] h-[35px] border-2 border-[#c00000]" />
        </div>
        <p className="mt-[13px] ml-[286px] text-[15px] leading-[19px] whitespace-nowrap">
          Image 작업 후<br />
          Excel 저장
        </p>
        <div className="mt-[18px] w-[298px]">
          <ExcelWindow
            compact
            title="SimulationView.xlsx - Microsoft Excel"
            cell="Z58"
            formula=""
            ribbon={["파일", "홈", "삽입", "페이지 레이아웃", "수식", "데이터", "검토", "보기", "부하 테스트", "팀"]}
            tabs={["Sheet1", "Sheet2", "0_-60", "0_-80", "0_-70"]}
            zoom="40%"
          >
            <CaptureSheet />
          </ExcelWindow>
        </div>
      </div>
      <Connectors />
    </main>
  );
}
